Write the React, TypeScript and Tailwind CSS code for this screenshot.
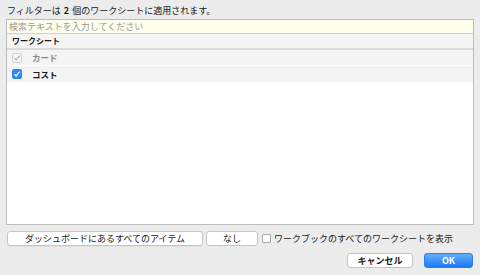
import React from "react";

const font = { fontFamily: '"Noto Sans CJK JP", "Noto Sans", sans-serif' };

function Check({ disabled }: { disabled?: boolean }) {
  if (disabled) {
    return (
      <div className="w-[10px] h-[10px] rounded-[2px] border border-[#cfcfcf] bg-[#f7f7f7] flex items-center justify-center">
        <svg width="8" height="8" viewBox="0 0 8 8">
          <path d="M1.5 4.2 L3.2 6 L6.6 1.6" fill="none" stroke="#a8a8a8" strokeWidth="1.1" />
        </svg>
      </div>
    );
  }
  return (
    <div className="w-[10px] h-[10px] rounded-[2px] bg-[#2f86f6] flex items-center justify-center">
      <svg width="8" height="8" viewBox="0 0 8 8">
        <path d="M1.5 4.2 L3.2 6 L6.6 1.6" fill="none" stroke="#ffffff" strokeWidth="1.3" />
      </svg>
    </div>
  );
}

export default function App() {
  return (
    <div
      className="w-[480px] h-[275px] bg-[#ececec] flex flex-col px-[6px] text-[#1a1a1a]"
      style={font}
    >
      <div className="h-[19px] flex items-center pl-[1px] pt-[2px] text-[9px] leading-none">
        フィルターは <span className="font-bold mx-[3px]">2</span> 個のワークシートに適用されます。
      </div>
      <div className="w-[468px] h-[206px] border border-[#bcbcbc] bg-white flex flex-col">
        <div className="h-[14px] bg-[#fefeec] border-b border-[#d0d0d0] flex items-center pl-[2px] text-[9px] leading-none text-[#9a9a9a]">
          検索テキストを入力してください
        </div>
        <div className="h-[16px] bg-[#f4f4f4] border-b-2 border-[#dadada] flex items-center pl-[5px] text-[8px] font-bold leading-none">
          ワークシート
        </div>
        <div className="h-[16px] bg-[#f4f4f4] border-b border-white flex items-center pl-[5px] gap-[10px] text-[8.5px] font-bold leading-none text-[#8a8a8a]">
          <Check disabled />
          <span>カード</span>
        </div>
        <div className="h-[16px] bg-[#f4f4f4] flex items-center pl-[5px] gap-[10px] text-[8.5px] font-bold leading-none">
          <Check />
          <span>コスト</span>
        </div>
      </div>
      <div className="mt-[6px] h-[15px] flex items-center pl-[1px]">
        <button className="w-[196px] h-[15px] bg-white border border-[#c6c6c6] rounded-[3px] text-[9px] leading-none flex items-center justify-center shadow-[0_1px_0_rgba(0,0,0,0.05)]">
          ダッシュボードにあるすべてのアイテム
        </button>
        <button className="ml-[3px] w-[52px] h-[15px] bg-white border border-[#c6c6c6] rounded-[3px] text-[9px] leading-none flex items-center justify-center">
          なし
        </button>
        <div className="ml-[4px] w-[9px] h-[9px] border border-[#a8a8a8] bg-white rounded-[1px]" />
        <span className="ml-[3px] text-[9px] leading-none">ワークブックのすべてのワークシートを表示</span>
      </div>
      <div className="mt-[6px] h-[16px] flex items-center justify-end pr-[1px] gap-[11px]">
        <button className="w-[66px] h-[15px] bg-white border border-[#c6c6c6] rounded-[3px] text-[9px] font-bold leading-none flex items-center justify-center">
          キャンセル
        </button>
        <button className="w-[49px] h-[15px] rounded-[3px] bg-gradient-to-b from-[#62aefc] to-[#1b79f4] border border-[#2a7ef0] text-white text-[9px] font-bold leading-none flex items-center justify-center">
          OK
        </button>
      </div>
    </div>
  );
}
